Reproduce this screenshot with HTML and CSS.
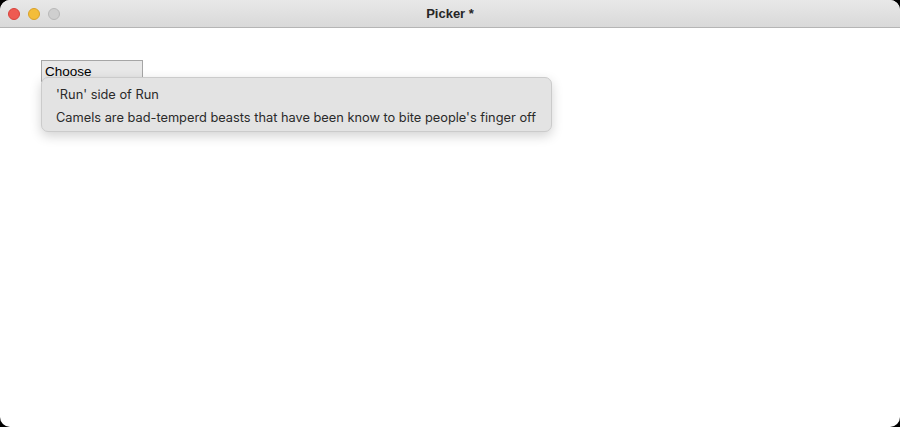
FILE: index.html
```html
<!DOCTYPE html>
<html>
<head>
<meta charset="utf-8">
<link rel="stylesheet" href="styles.css">
</head>
<body>
<div class="window">
  <div class="titlebar">
    <div class="lights">
      <span class="light red"></span>
      <span class="light yellow"></span>
      <span class="light gray"></span>
    </div>
    <div class="title">Picker *</div>
  </div>
  <div class="content">
    <div class="picker">
      <div class="choose">Choose</div>
      <div class="menu">
        <div class="item">'Run' side of Run</div>
        <div class="item">Camels are bad-temperd beasts that have been know to bite people's finger off</div>
      </div>
    </div>
  </div>
</div>
</body>
</html>
```
FILE: styles.css
```css
html, body {
  margin: 0;
  padding: 0;
  background: #000;
  width: 900px;
  height: 427px;
  overflow: hidden;
}
.window {
  width: 900px;
  height: 427px;
  background: #fff;
  border-radius: 10px;
  overflow: hidden;
  display: flex;
  flex-direction: column;
}
.titlebar {
  height: 27px;
  flex: none;
  background: linear-gradient(#e8e8e8, #d9d9d9);
  border-bottom: 1px solid #b5b5b5;
  position: relative;
  display: flex;
  align-items: center;
}
.lights {
  display: flex;
  gap: 8px;
  padding-left: 8px;
}
.light {
  width: 12px;
  height: 12px;
  border-radius: 50%;
  box-sizing: border-box;
}
.red { background: #ee5a52; border: 1px solid #d8433c; }
.yellow { background: #f3bd3a; border: 1px solid #d9a12a; }
.gray { background: #cfcfcf; border: 1px solid #b8b8b8; }
.title {
  position: absolute;
  left: 0;
  right: 0;
  top: 0;
  line-height: 27px;
  text-align: center;
  font-family: "Liberation Sans", Arial, sans-serif;
  font-weight: bold;
  font-size: 13px;
  color: #262626;
}
.content {
  flex: 1;
  padding: 32px 0 0 41px;
}
.picker {
  position: relative;
}
.choose {
  width: 97px;
  height: 20px;
  box-sizing: content-box;
  border: 1px solid #a6a6a6;
  background: #e8e8e8;
  font-family: "Liberation Sans", Arial, sans-serif;
  font-size: 13.5px;
  line-height: 22px;
  padding-left: 3px;
  color: #000;
}
.menu {
  position: absolute;
  left: 0;
  top: 17px;
  width: 511px;
  height: 55px;
  background: #e3e3e3;
  border: 1px solid #cbcbcb;
  border-radius: 7px;
  box-shadow: 0 4px 12px rgba(0,0,0,0.18);
  padding-top: 5px;
  box-sizing: border-box;
}
.item {
  font-family: "Inter", "Noto Sans", sans-serif;
  font-size: 12.8px;
  color: #2a2a2a;
  height: 23px;
  line-height: 23px;
  padding-left: 14px;
  white-space: nowrap;
}
```
